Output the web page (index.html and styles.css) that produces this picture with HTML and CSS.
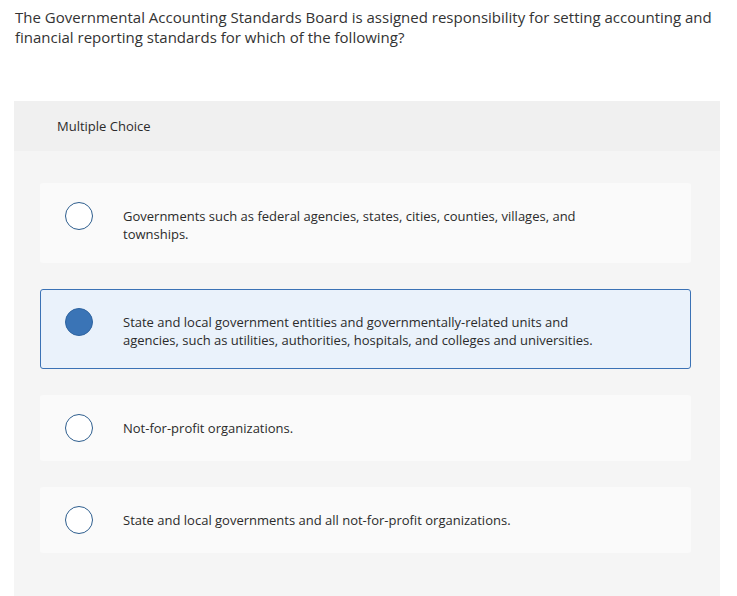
FILE: index.html
```html
<!DOCTYPE html>
<html lang="en">
<head>
<meta charset="utf-8">
<title>Multiple Choice</title>
<link rel="stylesheet" href="styles.css">
</head>
<body>
<div class="page">
  <p class="question">The Governmental Accounting Standards Board is assigned responsibility for setting accounting and financial reporting standards for which of the following?</p>
  <section class="panel">
    <header class="panel-head">Multiple Choice</header>
    <div class="options">
      <div class="option">
        <span class="radio"></span>
        <span class="label">Governments such as federal agencies, states, cities, counties, villages, and townships.</span>
      </div>
      <div class="option selected">
        <span class="radio"></span>
        <span class="label">State and local government entities and governmentally-related units and agencies, such as utilities, authorities, hospitals, and colleges and universities.</span>
      </div>
      <div class="option">
        <span class="radio"></span>
        <span class="label">Not-for-profit organizations.</span>
      </div>
      <div class="option">
        <span class="radio"></span>
        <span class="label">State and local governments and all not-for-profit organizations.</span>
      </div>
    </div>
  </section>
</div>
</body>
</html>
```

FILE: styles.css
```css
html, body {
  margin: 0;
  padding: 0;
  background: #ffffff;
}
body {
  font-family: "Open Sans", "Liberation Sans", sans-serif;
  color: #2b2b2b;
}
.page {
  padding: 7px 17px 0 14px;
}
.question {
  margin: 0 0 0 1px;
  font-size: 15px;
  line-height: 20px;
  color: #333333;
}
.panel {
  margin-top: 54px;
  background: #f5f5f5;
  height: 520px;
}
.panel-head {
  background: #f0f0f0;
  height: 50px;
  display: flex;
  align-items: center;
  padding-left: 43px;
  font-size: 13px;
  color: #2b2b2b;
}
.options {
  padding: 32px 29px 0 26px;
  display: flex;
  flex-direction: column;
  gap: 26px;
}
.option {
  background: #fafafa;
  border-radius: 3px;
  border: 1px solid transparent;
  padding: 18px 0 18px 24px;
  display: flex;
  align-items: flex-start;
}
.option.selected {
  background: #eaf2fb;
  border-color: #3b72b5;
}
.radio {
  flex: none;
  box-sizing: border-box;
  width: 28px;
  height: 28px;
  border: 1.5px solid #2e5e8e;
  border-radius: 50%;
  background: #ffffff;
  margin-right: 30px;
}
.selected .radio {
  background: #3a74b6;
  border-color: #2f64a0;
}
.label {
  max-width: 478px;
  font-size: 13px;
  line-height: 18px;
  padding: 5px 0 1px;
  color: #2b2b2b;
}
```
